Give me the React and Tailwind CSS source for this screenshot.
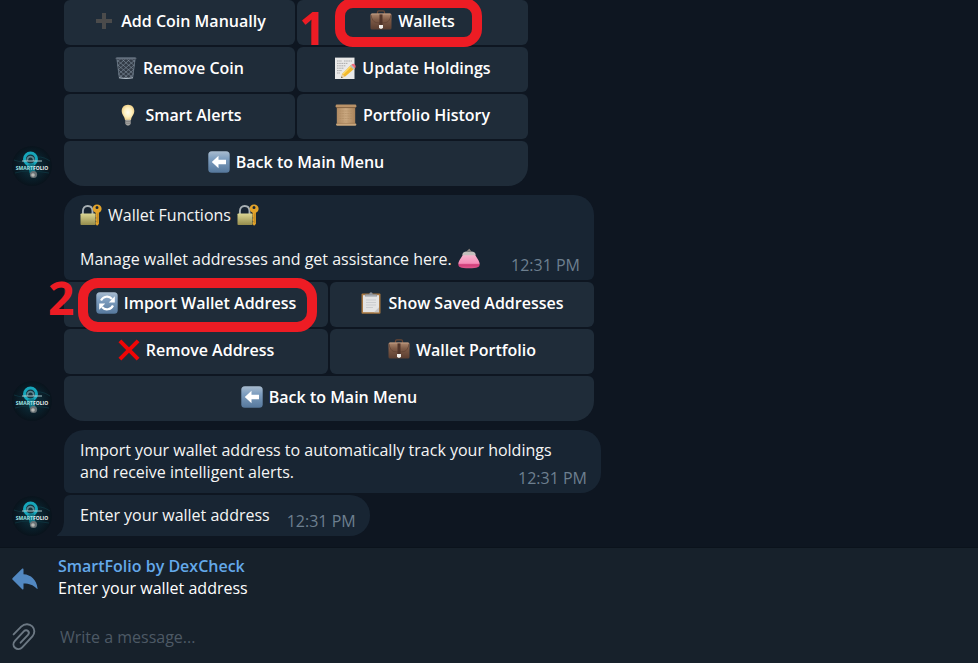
import React, { useState } from 'react';

const Gradients = () => (
  <svg className="absolute h-0 w-0" aria-hidden="true">
    <defs>
      <linearGradient id="blueKey" x1="0" y1="0" x2="0" y2="1">
        <stop offset="0" stopColor="#a9bccf" />
        <stop offset="0.35" stopColor="#7f9fc0" />
        <stop offset="1" stopColor="#56789c" />
      </linearGradient>
      <linearGradient id="leather" x1="0" y1="0" x2="0" y2="1">
        <stop offset="0" stopColor="#b08a70" />
        <stop offset="0.4" stopColor="#7d5a46" />
        <stop offset="1" stopColor="#5a3d30" />
      </linearGradient>
      <linearGradient id="brass" x1="0" y1="0" x2="0" y2="1">
        <stop offset="0" stopColor="#dcd794" />
        <stop offset="1" stopColor="#958c4c" />
      </linearGradient>
      <linearGradient id="pink" x1="0" y1="0" x2="0" y2="1">
        <stop offset="0" stopColor="#f7b9cf" />
        <stop offset="0.65" stopColor="#f58bb8" />
        <stop offset="0.75" stopColor="#d03c78" />
        <stop offset="1" stopColor="#e0588f" />
      </linearGradient>
      <linearGradient id="papyrus" x1="0" y1="0" x2="1" y2="0">
        <stop offset="0" stopColor="#b08a62" />
        <stop offset="0.5" stopColor="#cba981" />
        <stop offset="1" stopColor="#a98259" />
      </linearGradient>
      <radialGradient id="glow">
        <stop offset="0" stopColor="#fffdf0" />
        <stop offset="0.6" stopColor="#fff0bd" />
        <stop offset="1" stopColor="#f0d28c" />
      </radialGradient>
      <radialGradient id="avatarBg">
        <stop offset="0" stopColor="#0d3742" />
        <stop offset="0.6" stopColor="#0a202b" />
        <stop offset="1" stopColor="#09131c" />
      </radialGradient>
    </defs>
  </svg>
);

const Icon = ({ children }) => (
  <svg viewBox="0 0 22 22" className="h-[22px] w-[22px] shrink-0" fill="none" aria-hidden="true">
    {children}
  </svg>
);

const PlusIcon = () => (
  <Icon>
    <path d="M9 3h4v6h6v4h-6v6H9v-6H3V9h6z" fill="#4b4b4b" />
  </Icon>
);

const BriefcaseIcon = () => (
  <Icon>
    <path d="M7.5 4V2.200q0-1.400 1.400-1.400h4.200q1.400 0 1.400 1.400V4" stroke="#6b4735" strokeWidth="1.300" />
    <rect x="0.500" y="3.500" width="21" height="16" rx="1.500" fill="url(#leather)" />
    <path d="M1 5q1 6.500 5 7.600 5 1 10 0 4-1.100 5-7.600" stroke="#5f4132" strokeWidth="0.700" />
    <path d="M9.500 4h3v11h-3z" fill="#51352a" />
    <path d="M1.500 4h19" stroke="#c7a58b" strokeWidth="0.700" />
    <path d="M9 15h4v2.600l-1 1.200h-2l-1-1.200z" fill="#f1eeea" />
  </Icon>
);

const TrashIcon = () => (
  <Icon>
    <path d="M1.500 1.500h19l-2.300 18.600q-.2 1-1.200 1H5q-1 0-1.200-1z" fill="#323b46" />
    <path
      d="M2 5l4-3.500M2.300 9l8.500-7.500M3 13l12.800-11.500M3.500 17L20 3M5 20L19.400 7.800M9.500 20.500l9.300-8M14.500 20.500l4-3.500M20 5l-4-3.500M19.700 9l-8.500-7.500M19 13L6.200 1.500M18.500 17L2 3M17 20L2.600 7.800M12.500 20.500l-9.300-8M7.500 20.500l-4-3.500"
      stroke="#8493a3"
      strokeWidth="0.600"
    />
    <path d="M2 2.500l2.300 18M20 2.500l-2.300 18" stroke="#6e7d8c" strokeWidth="0.800" />
    <rect x="0.500" y="0.600" width="21" height="2" rx="1" fill="#56616e" />
    <path d="M1.500 1h19" stroke="#8896a5" strokeWidth="0.600" />
    <path d="M4 20.700q7 1.400 14 0" stroke="#b3bfca" strokeWidth="1.100" />
  </Icon>
);

const MemoIcon = () => (
  <Icon>
    <path d="M1 .6h19.500V22H1z" fill="#e9e9e9" />
    <path
      d="M3 4h5M10 4h8M3 6.400h11M3 8.800h9M3 11.200h7M3 13.600h5M3 16h3"
      stroke="#9c9c9c"
      strokeWidth="0.800"
      strokeDasharray="1.600 .6"
    />
    <path d="M17.200 7.800l3.600 3.400-9.600 8.200-3.800 1.500.6-4z" fill="#f2b92c" />
    <path d="M17 9.300l-8 7.800" stroke="#ffdd70" strokeWidth="1.100" />
    <path d="M8 17l3 2.500-3.800 1.400z" fill="#e9cfa5" />
    <path d="M7.600 19.400l1 1-1.500.5z" fill="#333" />
    <path d="M15.900 9l1.400-1.300 3.600 3.400-1.400 1.300z" fill="#b8bfc4" />
    <path d="M17.300 7.700l1-.8q1.400-.6 2.500.6t.9 2.700l-.9.9z" fill="#ee6b7c" />
  </Icon>
);

const BulbIcon = () => (
  <Icon>
    <path d="M11 .8c3.900 0 6.300 2.800 6.300 6.200 0 3.800-2.900 5.200-3.300 9H8c-.4-3.800-3.300-5.200-3.300-9C4.700 3.600 7.100.8 11 .8z" fill="url(#glow)" />
    <path d="M8.300 15.800h5.400v4.200l-1.700 1.500h-2l-1.700-1.500z" fill="#a7a7a4" />
    <path d="M8.300 17.400h5.400M8.300 19.200h5.400" stroke="#6b6b6b" strokeWidth="0.600" />
  </Icon>
);

const ScrollIcon = () => (
  <Icon>
    <path d="M1.800 3h18.400v17H1.800z" fill="url(#papyrus)" />
    <path d="M4.500 7h13M4.500 9.500h13M4.500 12h13M4.500 14.500h13M4.500 17h10" stroke="#ab8860" strokeWidth="0.500" strokeDasharray="2 .6" />
    <rect x="0.600" y="0.600" width="20.800" height="3" rx="1.300" fill="#b99268" />
    <path d="M1.500 3.600h19" stroke="#6d4d31" strokeWidth="0.700" />
    <rect x="1" y="19.400" width="20.400" height="2.300" rx="1.100" fill="#c9a67c" />
    <path d="M2 19.300h18" stroke="#896541" strokeWidth="0.500" />
  </Icon>
);

const BackIcon = () => (
  <Icon>
    <rect x="0.300" y="0.300" width="21.400" height="21.400" rx="3.500" fill="url(#blueKey)" />
    <path d="M10.500 4.800v3.900H18v4.600h-7.500v3.900L3.800 11z" fill="#fff" />
  </Icon>
);

const RefreshIcon = () => (
  <Icon>
    <rect x="0.300" y="0.300" width="21.400" height="21.400" rx="3.500" fill="url(#blueKey)" />
    <path d="M5 8.500A6.600 6.600 0 0 1 16 7M17 13.500A6.600 6.600 0 0 1 6 15" stroke="#fff" strokeWidth="2.200" />
    <path d="M18.800 4.300v6.200h-6z" fill="#fff" />
    <path d="M3.200 17.700v-6.200h6z" fill="#fff" />
  </Icon>
);

const ClipboardIcon = () => (
  <Icon>
    <rect x="1.500" y="1.500" width="19" height="20.200" rx="1" fill="#a87842" />
    <path d="M3 3.200h16v17H3z" fill="#e3e3e3" />
    <path d="M6 8h10M6 10.500h10M6 13h10M6 15.500h7" stroke="#bfc2c5" strokeWidth="0.700" />
    <path d="M14 20.200l5-5v5z" fill="#c6c6c6" />
    <path d="M5 4.600V3q0-.8.8-.8h3.400Q9.500.3 11 .3t1.800 1.900h3.400q.8 0 .8.8v1.600z" fill="#8d9299" />
    <path d="M5.500 3.800h11" stroke="#c2c6ca" strokeWidth="0.600" />
  </Icon>
);

const CrossIcon = () => (
  <Icon>
    <path d="M3.300.5L11 8.200 18.700.5l2.800 2.800L13.800 11l7.700 7.700-2.800 2.800L11 13.800l-7.700 7.700L.5 18.700 8.200 11 .5 3.300z" fill="#f00606" />
  </Icon>
);

const LockKeyIcon = () => (
  <Icon>
    <path d="M2.900 10V7.200C2.900 3.800 4.700 2 7.700 2s4.800 1.800 4.800 5.200V10" stroke="#a8b0b4" strokeWidth="1.900" />
    <rect x="0.500" y="9.500" width="15" height="11.500" rx="0.800" fill="url(#brass)" />
    <path
      fillRule="evenodd"
      d="M17 .5c2.700 0 4.600 1.900 4.600 4.300 0 2-1 3.300-2.700 4V20l-1.800 1.700-1.500-1.500v-1.800l.8-.8-.8-1v-1.800l.8-.8-.8-1V8.700c-1.700-.7-2.900-2-2.900-3.900C12.700 2.400 14.300.5 17 .5zm0 1.500a1.500 1.500 0 1 0 0 3 1.500 1.500 0 0 0 0-3z"
      fill="#e2a32a"
    />
    <path d="M17.500 9.500V19" stroke="#b97e1c" strokeWidth="0.600" />
  </Icon>
);

const PurseIcon = () => (
  <Icon>
    <path d="M5 6c-.6 3-4.700 6.500-4.700 10 0 3 2 4.300 10.700 4.300S21.700 19 21.700 16c0-3.500-4.100-7-4.700-10z" fill="url(#pink)" />
    <path d="M4.500 7.200V6Q5 3.800 8.500 3.500h5Q17 3.800 17.500 6v1.200z" fill="#c5c0bd" />
    <path d="M9 3.700l2.800-2.500M13 3.700l-2.400-2.500" stroke="#85807c" strokeWidth="1.300" />
  </Icon>
);

const Avatar = () => (
  <svg viewBox="0 0 40 40" className="h-10 w-10 shrink-0" role="img" aria-label="SmartFolio">
    <circle cx="20" cy="20" r="20" fill="url(#avatarBg)" />
    <path d="M2 14q10 4 18-1t18 2M3 27q12-4 34 0" stroke="#0e3641" strokeWidth="0.800" fill="none" />
    <circle cx="18.500" cy="13" r="6" fill="#17343e" stroke="#16a6bb" strokeWidth="3" />
    <path d="M15.500 15a3.200 3.200 0 1 1 6 0" stroke="#5c8791" strokeWidth="1.800" fill="none" />
    <path d="M19 18l1.500 9" stroke="#137686" strokeWidth="6" />
    <circle cx="21.500" cy="28.500" r="3.600" fill="#687175" />
    <circle cx="21" cy="29" r="1.800" fill="#b6b8b4" />
    <path d="M10 15h20" stroke="#b9d7da" strokeWidth="0.900" />
    <text
      x="20"
      y="24"
      textAnchor="middle"
      className="font-['Liberation_Sans_Narrow','Open_Sans',sans-serif] text-[5px] font-bold"
      fill="#eef4f4"
    >
      <tspan fill="#9fe3e6">SMART</tspan>FOLIO
    </text>
  </svg>
);

const Highlight = ({ className }) => (
  <span className={`pointer-events-none absolute z-10 border-10 border-[#ed1c24] ${className}`} />
);

const Step = ({ className, children }) => (
  <span
    className={`pointer-events-none absolute z-10 font-['Noto_Sans',sans-serif] text-[46px] leading-none font-bold text-[#ed1c24] ${className}`}
  >
    {children}
  </span>
);

const KeyboardButton = ({ icon, wide, children, overlay }) => (
  <button
    type="button"
    className={`relative flex h-[45px] items-center justify-center gap-1.5 bg-[#1f2c39] pb-1 font-semibold text-white ${
      wide ? 'col-span-2 rounded-t-md rounded-b-[20px]' : 'rounded-md'
    }`}
  >
    {icon}
    <span>{children}</span>
    {overlay}
  </button>
);

const Message = ({ className, textClassName = '', children }) => (
  <div className={`grid bg-[#182533] pr-3.5 pl-4 text-[#f5f5f5] ${className}`}>
    <div className={`col-start-1 row-start-1 pt-[9px] pb-2.5 ${textClassName}`}>{children}</div>
    <time className="col-start-1 row-start-1 mb-1 self-end justify-self-end text-[#6d7f8f]">12:31 PM</time>
  </div>
);

const Group = ({ className = '', children }) => (
  <div className="flex items-end gap-3">
    <Avatar />
    <div className={`flex w-full flex-col gap-0.5 ${className}`}>{children}</div>
  </div>
);

function App() {
  const [message, setMessage] = useState('');

  return (
    <div className="flex min-h-screen flex-col bg-[#0e1621] font-['Open_Sans',sans-serif] text-base leading-[22px]">
      <Gradients />
      <main className="flex flex-col gap-[9px] px-3">
        <Group className="max-w-[464px]">
          <div className="grid grid-cols-2 gap-0.5">
            <KeyboardButton icon={<PlusIcon />}>Add Coin Manually</KeyboardButton>
            <KeyboardButton
              icon={<BriefcaseIcon />}
              overlay={
                <>
                  <Step className="top-1 left-0.5">1</Step>
                  <Highlight className="-top-0.5 -bottom-0.5 left-[38px] right-[46px] rounded-[18px]" />
                </>
              }
            >
              Wallets
            </KeyboardButton>
            <KeyboardButton icon={<TrashIcon />}>Remove Coin</KeyboardButton>
            <KeyboardButton icon={<MemoIcon />}>Update Holdings</KeyboardButton>
            <KeyboardButton icon={<BulbIcon />}>Smart Alerts</KeyboardButton>
            <KeyboardButton icon={<ScrollIcon />}>Portfolio History</KeyboardButton>
            <KeyboardButton icon={<BackIcon />} wide>Back to Main Menu</KeyboardButton>
          </div>
        </Group>

        <Group className="max-w-[530px]">
          <Message className="rounded-t-[20px] rounded-b-md">
            <p className="mb-[22px] flex items-center gap-1.5">
              <LockKeyIcon />
              Wallet Functions
              <LockKeyIcon />
            </p>
            <p className="flex items-center gap-1.5">
              Manage wallet addresses and get assistance here.
              <PurseIcon />
            </p>
          </Message>
          <div className="grid grid-cols-2 gap-0.5">
            <KeyboardButton
              icon={<RefreshIcon />}
              overlay={
                <>
                  <Step className="-top-2 -left-4">2</Step>
                  <Highlight className="-top-1 -bottom-[5px] left-3.5 right-[11px] rounded-[20px]" />
                </>
              }
            >
              Import Wallet Address
            </KeyboardButton>
            <KeyboardButton icon={<ClipboardIcon />}>Show Saved Addresses</KeyboardButton>
            <KeyboardButton icon={<CrossIcon />}>Remove Address</KeyboardButton>
            <KeyboardButton icon={<BriefcaseIcon />}>Wallet Portfolio</KeyboardButton>
            <KeyboardButton icon={<BackIcon />} wide>Back to Main Menu</KeyboardButton>
          </div>
        </Group>

        <Group className="max-w-[537px]">
          <Message className="rounded-[20px] rounded-bl-md" textClassName="pr-6">
            Import your wallet address to automatically track your holdings and receive intelligent alerts.
          </Message>
          <div className="relative w-fit">
            <Message className="rounded-r-[20px] rounded-tl-md" textClassName="pr-[86px]">
              Enter your wallet address
            </Message>
            <svg viewBox="0 0 7 14" className="absolute bottom-0 -left-[7px] h-3.5 w-[7px]" aria-hidden="true">
              <path d="M7 0v14H0q0-1 1.200-1.800Q6 9 7 0z" fill="#182533" />
            </svg>
          </div>
        </Group>
      </main>

      <footer className="mt-auto border-t border-[#0b131c] bg-[#17212b]">
        <div className="flex items-center gap-5 px-3 pt-[7px] pb-3">
          <svg viewBox="0 0 26 22" className="mt-1 h-[22px] w-[26px]" aria-hidden="true">
            <path
              d="M10.300.5Q11.500 0 11.500 1.500V6.200C19 6.600 24.500 11.500 25.600 20.500q-.2 1-1 .1C21 16.800 17.500 15.600 11.500 15.500v5q0 1.600-1.300.7L.7 11.800q-.9-.9 0-1.800z"
              fill="#5288c1"
            />
          </svg>
          <div>
            <p className="font-semibold text-[#64a9ea]">SmartFolio by DexCheck</p>
            <p className="text-white">Enter your wallet address</p>
          </div>
        </div>
        <div className="flex h-13 items-center gap-6 px-3">
          <button type="button" aria-label="Attach file">
            <svg viewBox="0 0 24 28" className="h-7 w-6" fill="none" stroke="#6c7883" strokeWidth="1.900" strokeLinecap="round" aria-hidden="true">
              <path d="M1.600 11.400l7.600-7.800C12.700.2 17.600.7 20.300 3.400c2.700 2.800 2.700 7 .1 9.900L10.200 24.400c-2 2.200-5.200 2.300-7.200.4s-2-4.900-.1-7L12 8.200c1.200-1.300 2.900-1.300 4-.2s1.100 2.700 0 3.900l-7.400 7.800" />
            </svg>
          </button>
          <input
            type="text"
            aria-label="Message"
            placeholder="Write a message..."
            value={message}
            onChange={(e) => setMessage(e.target.value)}
            className="min-w-0 flex-1 bg-transparent text-white outline-none placeholder:text-[#4d5965]"
          />
        </div>
      </footer>
    </div>
  );
}

export default App;
